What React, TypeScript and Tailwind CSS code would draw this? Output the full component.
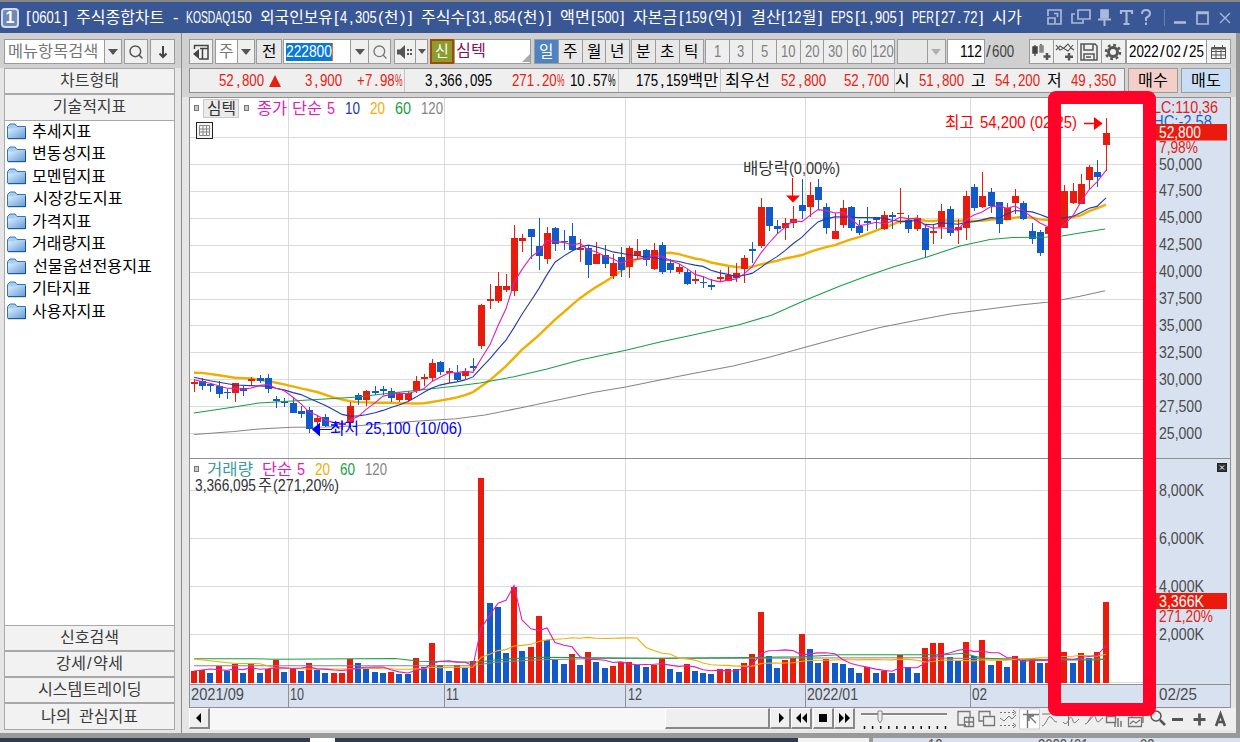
import React, { useLayoutEffect, useRef, useState } from "react";
import clsx from "clsx";
import { Search } from "lucide-react";

/* ------------------------------------------------------------------ */
/* Fixed pitch text: Hangul takes two cells, everything else one       */
/* ------------------------------------------------------------------ */

function Run({ text, width }: { text: string; width: number }) {
  const ref = useRef<HTMLSpanElement>(null);
  const [scale, setScale] = useState(1);

  // squeeze what is too wide for its cells, center what is narrower
  useLayoutEffect(() => {
    if (ref.current && ref.current.offsetWidth) setScale(Math.min(1.03, width / ref.current.offsetWidth));
  }, [text, width]);

  return (
    <span className="inline-block text-center whitespace-pre" style={{ width }}>
      <span ref={ref} className="inline-block origin-left" style={{ transform: `scaleX(${scale})` }}>
        {text}
      </span>
    </span>
  );
}

function Cells({ text, cell = 7.33, className }: { text: string; cell?: number; className?: string }) {
  const runs = text.match(/[가-힣]+|[A-Z]+|[0-9]+|\s+|./g) ?? [];
  return (
    <span className={clsx("inline-block whitespace-nowrap leading-none", className)}>
      {runs.map((run, i) => (
        <Run key={i} text={run} width={run.length * cell * (/[가-힣]/.test(run) ? 2 : 1)} />
      ))}
    </span>
  );
}

/* ------------------------------------------------------------------ */
/* Chart data (y positions on the plot)                                */
/* ------------------------------------------------------------------ */

type Candle = ["r" | "b", number, number, number, number]; // direction, high, body top, body bottom, low

const CANDLES: Candle[] = [
  ["r", 379, 382, 384, 392], ["b", 378, 381, 386, 390], ["b", 383, 384, 386, 392], ["b", 381, 386, 394, 398],
  ["b", 389, 391.5, 393, 399], ["r", 383, 383, 393, 402], ["b", 386, 388, 391, 396], ["r", 377, 379, 381, 386],
  ["b", 375, 378, 381, 383], ["b", 374, 378, 389, 393], ["b", 396, 399, 401, 408], ["b", 398, 401, 402.5, 407],
  ["b", 397, 403, 413, 413], ["b", 406, 411, 414, 418], ["b", 407, 410, 429, 433], ["r", 415, 418, 422, 426],
  ["b", 414, 417, 426, 427], ["b", 423, 424, 426, 427], ["b", 421, 423, 425, 430], ["r", 402, 406, 422, 427],
  ["b", 393, 395, 400, 405], ["r", 390, 391, 400, 406], ["b", 386, 391, 392.5, 395], ["b", 386, 389, 391, 395],
  ["b", 388, 391, 398, 402], ["r", 392, 393, 400, 402], ["r", 391, 393, 400, 401], ["r", 376, 381, 391, 393],
  ["r", 374, 377, 378.5, 386], ["r", 359, 363, 378, 381], ["b", 361, 362, 372, 375], ["r", 368, 371, 373, 383],
  ["b", 365, 373, 380, 381], ["r", 368, 371, 376, 379], ["b", 358, 366, 368, 372], ["r", 304, 305, 346, 349],
  ["r", 284, 299, 301, 309], ["r", 272, 286, 301, 303], ["r", 274, 286, 290, 292], ["r", 225, 238, 291, 296],
  ["r", 234, 238, 241, 252], ["b", 229, 229, 237, 259], ["b", 218, 246, 256, 270], ["r", 227, 233, 259, 264],
  ["b", 227, 228, 244, 251], ["b", 230, 240.5, 242, 250], ["b", 223, 236, 250, 251], ["r", 239, 248, 250, 262],
  ["b", 245, 248, 265, 278], ["r", 242, 254, 264, 264], ["b", 245, 255, 264, 268], ["r", 254, 263, 276, 279],
  ["b", 247, 257, 270, 277], ["r", 246, 248, 267, 278], ["r", 239, 251, 256, 259], ["b", 249, 250, 260, 266],
  ["r", 243, 250, 269, 270], ["b", 242, 245, 272, 274], ["b", 259, 263, 270, 273], ["r", 264, 267, 272, 274],
  ["b", 269, 272, 284, 285], ["r", 270, 279, 280.5, 284], ["b", 276, 281.5, 283, 288], ["b", 279, 285, 286.5, 290],
  ["r", 270, 277, 278.5, 282], ["r", 267, 275, 281, 281], ["r", 263, 273, 278, 282], ["r", 255, 258, 269, 283],
  ["b", 242, 249, 251, 263], ["r", 198, 207, 246, 248], ["b", 207, 207, 226, 231], ["b", 220, 226, 229, 234],
  ["r", 218, 223, 228, 240], ["r", 206, 219, 223, 228], ["b", 179, 205, 211, 219], ["r", 182, 195, 207, 217],
  ["b", 179, 187, 200, 210], ["b", 203, 207, 228, 234], ["r", 213, 231, 239, 239], ["r", 200, 208, 225, 228],
  ["b", 206, 207, 228, 231], ["b", 220, 226, 233, 235], ["b", 207, 220.5, 222.5, 231], ["b", 217, 217, 220, 229],
  ["r", 211, 215, 229, 230], ["b", 212, 215, 216.5, 229], ["r", 188, 212.5, 214, 224], ["b", 215, 220, 229, 233],
  ["r", 215, 218, 229, 231], ["b", 224, 228, 250, 258], ["r", 224, 231, 232.5, 244], ["r", 204, 211, 227, 239],
  ["b", 206, 209, 233, 236], ["r", 219, 227, 230, 244], ["r", 191, 196, 228, 240], ["b", 184, 187, 208, 211],
  ["r", 172, 196, 207, 208], ["b", 188, 192, 206, 213], ["b", 202, 202, 224, 233], ["r", 203, 208, 220, 220],
  ["r", 189, 196, 203, 214], ["b", 201, 203, 219, 220], ["b", 223, 231, 239, 244], ["b", 230, 232, 253, 256],
  ["r", 225, 227, 234, 250], ["r", 212, 216, 228, 232], ["r", 185, 191, 228, 228], ["r", 183, 191, 203, 204],
  ["r", 174, 184, 204, 204], ["r", 165, 167, 180, 189], ["b", 160, 172, 177, 187], ["r", 118, 133, 145, 171],
];

const VOLUME_TOP = [
  671, 670, 673.3, 666.3, 671.3, 664, 673.3, 664.3, 673.3, 668.7, 660, 672, 668.7, 670.7, 663, 670.3, 673, 673, 673,
  658.7, 663, 668.3, 672, 673.3, 671.7, 674, 674, 658, 667, 643, 664.7, 670.7, 665, 668, 660.7, 478, 603, 606.7, 653,
  586.7, 650.7, 646.7, 615.7, 640, 659.7, 664.3, 654.3, 665.3, 651.7, 661.7, 668, 666, 662, 662, 665.3, 667, 665, 659,
  669, 672, 664, 670.7, 673, 674, 669, 669, 669, 663, 654.3, 611.7, 655.7, 668, 660, 657.7, 634.3, 649.3, 663, 659,
  663, 664.3, 668, 673, 667, 673, 671, 672.7, 655, 667.3, 673, 648, 643, 643, 657, 660.7, 641.7, 655.7, 640.3, 665.3,
  661, 666.7, 655.7, 660, 658, 663, 663, 656.7, 651.7, 663, 653, 658, 651.7, 601.7,
];

const VOLUME_DIR =
  "rrbrbrbrbrrbrbrbbrrrbbbbrbbrbrbbrbrrbbbrbrrbbbrbrbbrrrbbrrbbrbbbrrbrrrbbrrrbbrbbbbrbrbrbbrrrbbrbrbrbrbrbrrrbrbrr";

const STEP = 8.212;
const X0 = 194;
const xAt = (i: number) => Math.round(X0 + i * STEP);

const closes = CANDLES.map(([dir, , top, bottom]) => (dir === "r" ? top : bottom));

/* Moving average; `head` holds [index, y] points from before there are enough bars */
function average(values: number[], n: number, head: [number, number][]) {
  const points = head.map(([i, y]) => `${xAt(i)},${y}`);
  for (let i = n - 1; i < values.length; i++) {
    const sum = values.slice(i - n + 1, i + 1).reduce((a, b) => a + b, 0);
    points.push(`${xAt(i)},${(sum / n).toFixed(1)}`);
  }
  return points.join(" ");
}

const MA5 = average(closes, 5, [[0, 379.7], [2, 383.3]]);
const MA10 = average(closes, 10, [[0, 377.3], [2, 380.7], [5, 385]]);
const MA20 = average(closes, 20, [[0, 372.7], [1, 372.9], [3, 375.3], [5, 377.7], [7, 378.5], [9, 381], [11, 384.3], [13, 388.3], [15, 392], [17, 397.7]]);
const MA60 =
  "194,413 234,407 259,403 292,401 325,399 358,397 391,393 423,389.7 456,386 480,383 514,376.7 547,369 580,360 627,350 660,342 693,335 740,324.5 772,315 807,299.5 840,286 867,276 893,267 927,257 960,246 990,239.5 1013,237.5 1047,237 1062,236 1080,233 1105,229";
const MA120 =
  "194,434.5 234,431.5 259,429 292,427.3 325,427 358,425.7 391,423 423,420.7 456,418.7 485,415 520,408 560,399.5 593,392.5 627,386.7 660,380 693,373.5 733,366 770,357 806,347 843,337 880,327.5 918,320 950,314 987,309.3 1020,305 1047,302.3 1062,299.7 1080,296.3 1105,290.7";

const VOL5 = average(VOLUME_TOP, 5, [[0, 671], [2, 669]]);
const VOL20 = average(VOLUME_TOP, 20, [[0, 659], [3, 661.7], [5, 663.5], [8, 663.7], [10, 668], [14, 669]]);
const VOL60 =
  "194,658.7 255,658.7 275,659.3 395,658.5 420,661.3 475,662.3 505,659 540,657.3 660,658.3 748,657.5 800,656.7 840,654.7 945,654.7 963,653.3 982,658 1023,660 1100,660 1105,659";
const VOL120 = "194,665.7 472,665.7 495,662.3 540,659.7 600,658.5 800,658 920,657.7 1040,659.5 1105,659";

const PRICE_LABELS = ["50,000", "47,500", "45,000", "42,500", "40,000", "37,500", "35,000", "32,500", "30,000", "27,500", "25,000"];
const VOLUME_LABELS: [string, number][] = [["8,000K", 490.5], ["6,000K", 538.5], ["4,000K", 586.5], ["2,000K", 634.5]];
const MONTHS: [string, number, number][] = [["2021/09", 191, 53], ["10", 290, 14], ["11", 446, 13], ["12", 628, 14], ["2022/01", 807, 51], ["02", 972, 15], ["02/25", 1159, 38]];
const MONTH_LINES = [288, 444, 625, 805, 970];

const fill = (dir: string) => (dir === "r" ? "#e91b0c" : "#1259c9");

interface LabelProps {
  x: number;
  y: number;
  w: number;
  color: string;
  children: string;
  size?: number;
}

function Label({ x, y, w, color, children, size = 16 }: LabelProps) {
  return (
    <text x={x} y={y} fill={color} fontSize={size} textLength={w} lengthAdjust="spacingAndGlyphs">
      {children}
    </text>
  );
}

function Chart() {
  return (
    <svg viewBox="189 97 1042 611" className="block h-[611px] w-[1042px] shrink-0">
      <rect x="189" y="97" width="1042" height="611" fill="#fff" />
      <rect x="1152" y="97" width="79" height="611" fill="#d7e1ef" />
      <rect x="189" y="685" width="1042" height="23" fill="#d7e1ef" />

      {/* grid */}
      <g stroke="#dadada" shapeRendering="crispEdges">
        {[-1, ...PRICE_LABELS.keys()].map((i) => {
          const y = Math.floor(164.5 + i * 26.9) + 0.5;
          return <line key={i} x1="190" x2="1152" y1={y} y2={y} />;
        })}
        {VOLUME_LABELS.map(([t, y]) => (
          <line key={t} x1="190" x2="1152" y1={y} y2={y} />
        ))}
        <line x1="190" x2="1152" y1="682.5" y2="682.5" />
        {MONTH_LINES.map((x) => (
          <line key={x} x1={x + 0.5} x2={x + 0.5} y1="98" y2="684" />
        ))}
      </g>
      <g stroke="#8f8f8f" shapeRendering="crispEdges">
        {MONTH_LINES.map((x) => (
          <line key={x} x1={x + 0.5} x2={x + 0.5} y1="685" y2="707" />
        ))}
        <path d="M189 97.5H1231M189 458.5H1231M189 684.5H1231M189 707.5H1231M189.5 97V708M1230.5 97V708" fill="none" />
        {PRICE_LABELS.map((t, i) => (
          <line key={t} x1="1152" x2="1157" y1={164.5 + i * 26.9} y2={164.5 + i * 26.9} />
        ))}
        {VOLUME_LABELS.map(([t, y]) => (
          <line key={t} x1="1152" x2="1157" y1={y} y2={y} />
        ))}
      </g>

      {/* slow averages are drawn under the candles */}
      <g fill="none">
        <polyline points={MA120} stroke="#858585" strokeWidth="1.1" />
        <polyline points={MA20} stroke="#f2ae00" strokeWidth="2.4" />
      </g>

      <g shapeRendering="crispEdges">
        {CANDLES.map(([dir, high, top, bottom, low], i) => (
          <g key={i} fill={fill(dir)}>
            <rect x={xAt(i)} y={high} width="1" height={Math.max(low - high, 1)} />
            <rect x={xAt(i) - 3} y={top} width="7" height={Math.max(bottom - top, 1)} />
          </g>
        ))}
        {VOLUME_TOP.map((y, i) => (
          <rect key={i} x={xAt(i) - 3} y={y} width="6" height={683 - y} fill={fill(VOLUME_DIR[i])} />
        ))}
      </g>

      <g fill="none" strokeWidth="1.1">
        <polyline points={MA60} stroke="#17a043" />
        <polyline points={MA10} stroke="#2139b4" />
        <polyline points={MA5} stroke="#e31bb7" />
        <polyline points={VOL120} stroke="#858585" />
        <polyline points={VOL60} stroke="#17a043" />
        <polyline points={VOL20} stroke="#f2ae00" />
        <polyline points={VOL5} stroke="#e31bb7" />
      </g>

      {/* price legend */}
      <g fill="#c8c8c8" stroke="#777">
        <rect x="194.500" y="105.500" width="4" height="5" />
        <rect x="244.500" y="105.500" width="4" height="5" />
        <rect x="194.500" y="466.500" width="4" height="5" />
      </g>
      <rect x="203.500" y="99.500" width="35" height="18" fill="#ebebeb" stroke="#c9c9c9" />
      <Label x={207} y={113.5} w={29} color="#333">심텍</Label>
      <Label x={257} y={113.5} w={30} color="#e31bb7">종가</Label>
      <Label x={292} y={113.5} w={30} color="#e31bb7">단순</Label>
      <Label x={327} y={113.5} w={8} color="#e31bb7">5</Label>
      <Label x={345} y={113.5} w={15} color="#2139b4">10</Label>
      <Label x={370} y={113.5} w={15} color="#f2ae00">20</Label>
      <Label x={395} y={113.5} w={16} color="#17a043">60</Label>
      <Label x={421} y={113.5} w={22} color="#858585">120</Label>
      <g fill="#f4f4f4" stroke="#222">
        <rect x="196.500" y="122.500" width="16" height="16" />
        <path d="M199.500 125.500h10v10h-10zM203 125.500v10M206.500 125.500v10M199.500 129h10M199.500 132h10" stroke="#888" />
      </g>

      {/* volume legend */}
      <Label x={207} y={474.5} w={46} color="#3d9c9c">거래량</Label>
      <Label x={262} y={474.5} w={30} color="#e31bb7">단순</Label>
      <Label x={297} y={474.5} w={8} color="#e31bb7">5</Label>
      <Label x={315} y={474.5} w={15} color="#f2ae00">20</Label>
      <Label x={340} y={474.5} w={15} color="#17a043">60</Label>
      <Label x={365} y={474.5} w={22} color="#858585">120</Label>
      <Label x={195} y={491} w={61} color="#333">3,366,095</Label>
      <Label x={258} y={491} w={14} color="#333">주</Label>
      <Label x={273} y={491} w={66} color="#333">(271,20%)</Label>

      {/* annotations */}
      <Label x={945} y={127.500} w={29} color="#f00">최고</Label>
      <Label x={980} y={127.500} w={97} color="#f00">54,200 (02/25)</Label>
      <path d="M1084 123.500h18" stroke="#f00" strokeWidth="1.500" />
      <path d="M1094 117l8.500 6.500-8.500 6.500z" fill="#f00" />
      <Label x={743} y={173.500} w={46} color="#333">배당락</Label>
      <Label x={789} y={173.500} w={51} color="#333">(0,00%)</Label>
      <path d="M792.500 178v18" stroke="#f00" />
      <path d="M786 195.500h14l-7 7z" fill="#f00" />
      <path d="M332 429.500h-13" stroke="#00f" />
      <path d="M312 429.500l8-7v14z" fill="#00f" />
      <Label x={330} y={434} w={29} color="#00f">최저</Label>
      <Label x={365} y={434} w={97} color="#00f">25,100 (10/06)</Label>

      {/* price axis */}
      {PRICE_LABELS.map((t, i) => (
        <Label key={t} x={1159} y={169.5 + i * 26.9} w={43} color="#4c4c4c">
          {t}
        </Label>
      ))}
      <Label x={1153} y={113} w={65} color="#e01f12">LC:110,36</Label>
      <Label x={1153} y={127} w={59} color="#1d62ca">HC:-2,58</Label>
      <rect x="1153" y="124" width="74" height="16.500" fill="#e91b0c" />
      <Label x={1159} y={138} w={42} color="#fff">52,800</Label>
      <Label x={1159} y={153} w={39} color="#e01f12">7,98%</Label>

      {/* volume axis */}
      {VOLUME_LABELS.map(([t, y]) => (
        <Label key={t} x={1159} y={y + 5} w={45} color="#4c4c4c">
          {t}
        </Label>
      ))}
      <rect x="1153" y="593" width="74" height="16" fill="#e91b0c" />
      <Label x={1159} y={606.5} w={45} color="#fff">3,366K</Label>
      <Label x={1159} y={621.5} w={54} color="#e01f12">271,20%</Label>
      <rect x="1217.500" y="463.500" width="9" height="8" fill="#333" stroke="#222" />
      <path d="M1220 465.500l4 4m0-4l-4 4" stroke="#fff" />

      {MONTHS.map(([t, x, w]) => (
        <Label key={t} x={x} y={700} w={w} color="#4c4c4c">
          {t}
        </Label>
      ))}
    </svg>
  );
}

/* ------------------------------------------------------------------ */
/* Small controls                                                      */
/* ------------------------------------------------------------------ */

function Box({ className, children }: { className?: string; children?: React.ReactNode }) {
  return (
    <div className={clsx("flex h-[25px] shrink-0 items-center justify-center border border-[#9b9b9b]", className)}>
      {children}
    </div>
  );
}

function Caret({ className = "text-[#555]" }: { className?: string }) {
  return (
    <svg viewBox="0 0 10 6" className={clsx("h-[6px] w-[10px]", className)}>
      <path d="M0 0h10L5 6z" fill="currentColor" />
    </svg>
  );
}

function Tool({ children }: { children: React.ReactNode }) {
  return (
    <Box className="-mr-px w-[25px] bg-[#f0f0f0]">
      <svg viewBox="0 0 20 20" className="h-5 w-5" fill="none" stroke="#555" strokeWidth="1.5">
        {children}
      </svg>
    </Box>
  );
}

function TitleBar() {
  return (
    <header className="flex h-[33px] shrink-0 items-center border-t-2 border-[#868686] bg-[#3a5795]">
      <div className="ml-px flex h-[20px] w-[18px] items-center justify-center rounded-[4px] border-2 border-[#d5dcec] bg-[#7088b9] text-base leading-none font-bold text-white">
        1
      </div>
      <div className="ml-[6px] h-[20px] w-[1014px] overflow-hidden text-base leading-none text-white">
        <Cells
          className="pt-[2px]"
          text="[0601] 주식종합차트 - KOSDAQ150 외국인보유[4,305(천)] 주식수[31,854(천)] 액면[500] 자본금[159(억)] 결산[12월] EPS[1,905] PER[27.72] 시가"
        />
      </div>
      <svg viewBox="0 0 192 24" className="ml-[8px] h-6 w-[192px]" fill="none" stroke="#a9b9d9" strokeWidth="1.7">
        <path d="M1 10V4h13v14H9" />
        <path d="M1 12h7v6H1z" />
        <path d="M7 7.500h3.500V11" />
        <path d="M31 4h12v9H31zM28 8h-3v9h11v-3" />
        <path d="M54 4h7v8h-7z" fill="#a9b9d9" />
        <path d="M51 13.500h13M57.500 13v7" strokeWidth="2" />
        <path d="M74 8V5h11v3M79.500 5v13M76.500 18h6" strokeWidth="2.200" />
        <path d="M95 8q0-4 4-4t4 3.500q0 2.500-4 4.500v3M99 16.500v2.500" strokeWidth="2" />
        <path d="M117.500 3v17" stroke="#6a7fb0" strokeWidth="1" />
        <path d="M127 16.500h12" strokeWidth="2.600" />
        <path d="M150 6h11v12h-11zM150 7.500h11" />
        <path d="M173 7l10 10m0-10l-10 10" strokeWidth="1.300" />
      </svg>
    </header>
  );
}

const TREE = ["추세지표", "변동성지표", "모멘텀지표", "시장강도지표", "가격지표", "거래량지표", "선물옵션전용지표", "기타지표", "사용자지표"];

function PanelButton({ children }: { children: string }) {
  return (
    <button className="h-[26.3px] w-full shrink-0 border-x border-y border-[#a9a9a9] bg-[#f2f2f2] text-[#3c3c3c]">
      <Cells text={children} cell={7.4} />
    </button>
  );
}

function Folder() {
  return (
    <svg viewBox="0 0 19 17" className="h-[17px] w-[19px] shrink-0">
      <defs>
        <linearGradient id="folder" x1="0" y1="0" x2="1" y2="1">
          <stop offset="0" stopColor="#e0f0ff" />
          <stop offset="1" stopColor="#5f9bd8" />
        </linearGradient>
      </defs>
      <path d="M.500 15V3.500L3 1h5L10 3.500h8.500v12H1z" fill="#a5cdf2" stroke="#3276b8" />
      <path d="M1 15.500V5.500h6L8.500 4.500h10v11z" fill="url(#folder)" />
      <path d="M1 15.700h17.500V5" fill="none" stroke="#164e8c" />
    </svg>
  );
}

function Sidebar() {
  return (
    <aside className="flex w-[182px] shrink-0 flex-col border-r border-[#8c8c8c] bg-[#e6e6e6]">
      <div className="flex h-[35px] items-start bg-[#d0d0d0] pt-[6px] pl-1">
        <Box className="w-[101px] justify-start bg-white pl-[2px] text-[#777]">
          <Cells text="메뉴항목검색" cell={7.5} />
        </Box>
        <Box className="-ml-px w-[18px] bg-[#f0f0f0]">
          <Caret />
        </Box>
        <Box className="ml-[2px] w-[24px] bg-[#f0f0f0] text-[#555]">
          <Search size={16} strokeWidth={2.2} />
        </Box>
        <Box className="ml-[2px] w-[25px] bg-[#f0f0f0]">
          <svg viewBox="0 0 12 14" className="h-[14px] w-3">
            <path d="M6 1v11M2.500 8.500L6 12l3.500-3.500" fill="none" stroke="#444" strokeWidth="2" />
          </svg>
        </Box>
      </div>
      <div className="flex w-[175px] flex-col pl-1">
        <PanelButton>차트형태</PanelButton>
        <PanelButton>기술적지표</PanelButton>
        <ul className="h-[504px] border-x border-[#a9a9a9] bg-white text-black">
          {TREE.map((name) => (
            <li key={name} className="flex h-[22.5px] items-center pl-[2px]">
              <Folder />
              <Cells text={name} cell={7.45} className="ml-[6px]" />
            </li>
          ))}
        </ul>
        <PanelButton>신호검색</PanelButton>
        <PanelButton>강세/약세</PanelButton>
        <PanelButton>시스템트레이딩</PanelButton>
        <PanelButton>나의 관심지표</PanelButton>
      </div>
    </aside>
  );
}

function Toolbar() {
  return (
    <div className="flex h-[35px] shrink-0 items-start bg-[#d0d0d0] pt-[6px] pl-[7px]">
      <Box className="w-[24px] bg-[#f0f0f0]">
        <svg viewBox="0 0 16 16" className="h-4 w-4" fill="none" stroke="#444" strokeWidth="1.5">
          <path d="M1.500 5V1.500H15V15H6M7 4.500h8M9.500 5v10" />
          <path d="M0 10l6-5v10z" fill="#444" stroke="none" />
        </svg>
      </Box>
      <Box className="ml-[2px] w-[23px] bg-white text-[#777]">
        <Cells text="주" />
      </Box>
      <Box className="-ml-px w-[18px] bg-[#f0f0f0]">
        <Caret />
      </Box>
      <Box className="ml-px w-[26px] bg-[#e8e8e8] text-black">
        <Cells text="전" />
      </Box>
      <Box className="ml-px w-[68px] justify-start bg-white pl-[2px]">
        <Cells text="222800" cell={7.6} className="border-r border-[#e0782f] bg-[#0a78d7] py-px text-white" />
      </Box>
      <Box className="-ml-px w-[19px] bg-[#f0f0f0]">
        <Caret />
      </Box>
      <Box className="-ml-px w-[23px] bg-[#f0f0f0] text-[#777]">
        <Search size={16} />
      </Box>
      <Box className="ml-[3px] w-[22px] bg-[#f0f0f0]">
        <svg viewBox="0 0 16 14" className="h-[14px] w-4" fill="#555">
          <path d="M0 4.500h3L8 0v14L3 9.500H0zM10 4h2v2h-2zM10 8h2v2h-2zM13 4h2v2h-2zM13 8h2v2h-2z" />
        </svg>
      </Box>
      <Box className="-ml-px w-[13px] bg-[#f0f0f0]">
        <svg viewBox="0 0 8 5" className="h-[5px] w-2">
          <path d="M0 0h8L4 5z" fill="#555" />
        </svg>
      </Box>
      <Box className="ml-[2px] w-[24px] border-2 border-[#a14b08] bg-[#8b9d2e] text-white">
        <Cells text="신" cell={7} />
      </Box>
      <Box className="w-[77px] items-end justify-start bg-white pb-[4px] pl-px text-[#8a1157]">
        <Cells text="심텍" />
        <svg viewBox="0 0 8 8" className="-mb-[3px] ml-auto h-2 w-2">
          <path d="M8 0v8H0z" fill="#aaa" />
        </svg>
      </Box>
      <div className="ml-[3px] flex">
        <Box className="w-[24.8px] border-[#4d82c4] bg-[#4d82c4] text-white">
          <Cells text="일" />
        </Box>
        {["주", "월", "년"].map((t) => (
          <Box key={t} className="-ml-px w-[24.8px] bg-[#e8e8e8] text-black">
            <Cells text={t} />
          </Box>
        ))}
      </div>
      <div className="ml-px flex pl-px">
        {["분", "초", "틱"].map((t) => (
          <Box key={t} className="-ml-px w-[24.8px] bg-[#e8e8e8] text-black">
            <Cells text={t} />
          </Box>
        ))}
      </div>
      <div className="ml-[1.4px] flex pl-px">
        {["1", "3", "5", "10", "20", "30", "60", "120"].map((t) => (
          <Box key={t} className="-ml-px w-[24.7px] bg-[#eee] text-[#808080]">
            <Cells text={t} />
          </Box>
        ))}
      </div>
      <Box className="ml-[1.4px] w-[31px] bg-[#e8e8e8]" />
      <Box className="-ml-px w-[19px] bg-[#e8e8e8]">
        <Caret className="text-[#b0b0b0]" />
      </Box>
      <Box className="ml-px w-[38px] justify-end bg-white pr-px text-black">
        <Cells text="112" cell={7.5} />
      </Box>
      <Cells text="/600" cell={7.5} className="w-[44px] pt-[5px] text-[#444]" />
      <div className="flex">
        <Tool>
          <path d="M4 3v11M10 2v8" stroke="#555" />
          <path d="M2 5h4v6H2z" fill="#444" stroke="#444" />
          <path d="M9 4h3v6H9z" fill="#888" stroke="#888" />
          <path d="M16 11v7M12.500 14.500h7" strokeWidth="2.500" />
        </Tool>
        <Tool>
          <path d="M1 8l4-4 8 5 5-6M1 3l4 5 4-2 4-4 3 4 3 2" strokeWidth="1.100" />
          <path d="M14 11v7.500M10 14.700h8" strokeWidth="2.500" />
        </Tool>
        <Tool>
          <path d="M2 2h14l2 2v14H2zM5 2v6h9V2M5 18v-6h10v6M7 15h5" />
        </Tool>
        <Tool>
          <circle cx="10" cy="10" r="4.500" strokeWidth="3" />
          <circle cx="10" cy="10" r="7" strokeWidth="2.500" strokeDasharray="2.750 2.750" />
        </Tool>
      </div>
      <Box className="ml-px w-[81px] bg-white text-black">
        <Cells text="2022/02/25" cell={7.5} />
      </Box>
      <Box className="-ml-px w-[25px] bg-[#f4f4f4]">
        <svg viewBox="0 0 15 14" className="h-[14px] w-[15px]" fill="none" stroke="#555">
          <path d="M.500 2.500h14v11H.500zM.500 6.500h14M.500 10h14M5 5v8M10 5v8M3.500 0v3M11.500 0v3" />
          <path d="M1 3.500h13" strokeWidth="2" />
        </svg>
      </Box>
    </div>
  );
}

function Quote({ text, className }: { text: string; className?: string }) {
  return <Cells text={text} cell={7.45} className={clsx("shrink-0 text-right", className)} />;
}

function QuoteBar() {
  return (
    <div className="flex h-[29px] shrink-0 items-start bg-[#d4d4d4] pl-[7px]">
      <div className="flex h-[25px] w-[936px] items-center border border-[#8f8f8f] bg-[#efefef] text-[#e6210f]">
        <div className="flex h-full w-[215px] shrink-0 items-center border-r border-[#c4c4c4]">
          <Quote text="52,800" className="w-[74px]" />
          <svg viewBox="0 0 12 12" className="ml-[5px] h-3 w-3">
            <path d="M6 0l6 12H0z" fill="#e6210f" />
          </svg>
          <Quote text="3,900" className="w-[61px]" />
          <Quote text="+7.98%" className="w-[60px]" />
        </div>
        <div className="flex h-full w-[214px] shrink-0 items-center border-r border-[#c4c4c4]">
          <Quote text="3,366,095" className="w-[87px] text-black" />
          <Quote text="271.20%" className="w-[72px]" />
          <Quote text="10.57%" className="w-[51px] text-black" />
        </div>
        <div className="flex h-full w-[102px] shrink-0 items-center border-r border-[#c4c4c4] text-black">
          <Quote text="175,159백만" className="w-[99px]" />
        </div>
        <div className="flex h-full w-[174px] shrink-0 items-center border-r border-[#c4c4c4]">
          <Quote text="최우선" className="w-[48px] text-black" />
          <Quote text="52,800" className="w-[57px]" />
          <Quote text="52,700" className="w-[63px]" />
        </div>
        <Quote text="시" className="w-[15px] text-black" />
        <Quote text="51,800" className="w-[54px]" />
        <Quote text="고" className="w-[22px] text-black" />
        <Quote text="54,200" className="w-[54px]" />
        <Quote text="저" className="w-[22px] text-black" />
        <Quote text="49,350" className="w-[54px]" />
      </div>
      <Box className="ml-[3px] w-[50px] bg-[#f4cfc9] text-black">
        <Cells text="매수" />
      </Box>
      <Box className="ml-[3px] w-[50px] bg-[#c8def4] text-black">
        <Cells text="매도" />
      </Box>
    </div>
  );
}

function ScrollButton({ d, className }: { d: string; className?: string }) {
  return (
    <button
      className={clsx(
        "flex h-[21px] w-[21px] shrink-0 items-center justify-center border-t border-r-2 border-b-2 border-l border-t-white border-r-[#888] border-b-[#888] border-l-white bg-[#efefef]",
        className,
      )}
    >
      <svg viewBox="0 0 12 10" className="h-[10px] w-3">
        <path d={d} fill="#000" />
      </svg>
    </button>
  );
}

function BottomBar() {
  return (
    <div className="flex h-[22px] shrink-0 bg-[#efefef]">
      <ScrollButton d="M3 5l5-5v10z" />
      <div className="w-[455px] bg-[#f7f7f7]" />
      <div className="h-[21px] w-[105px] border-t border-r-2 border-b-2 border-l border-t-white border-r-[#888] border-b-[#888] border-l-white bg-[#efefef]" />
      <ScrollButton d="M5 0l5 5-5 5z" />
      <ScrollButton d="M6 0v10L1 5zM12 0v10L7 5z" />
      <ScrollButton d="M2 1h8v8H2z" className="ml-px" />
      <ScrollButton d="M1 0v10l5-5zM7 0v10l5-5z" />
      <svg viewBox="855 708 375 22" className="h-[22px] w-[375px]" fill="none" stroke="#777">
        {/* zoom slider */}
        <path d="M861 714h86" stroke="#888" strokeWidth="2" />
        <path d="M861 715.500h86" stroke="#fff" />
        <path d="M878 711h4v9l-2 3-2-3z" fill="#efefef" stroke="#888" />
        <path d="M864.500 726v3m8.100-3v3m8.100-3v3m8.100-3v3m8.100-3v3m8.100-3v3m8.100-3v3m8.100-3v3m8.100-3v3m8.100-3v3m8.100-3v3" stroke="#111" strokeWidth="1.500" />
        {/* chart tools */}
        <path d="M966 725h-8v-13.500h12v6M964.500 717.500h9v9h-9zM969 717.500v9M964.500 722h9" strokeWidth="1.300" />
        <path d="M983 721h-4v-9.500h11v4M983.500 716.500h11v9h-11z" strokeWidth="1.300" />
        <path d="M1000 712.500h14M1000 725.500h14" strokeDasharray="2 2" />
        <path d="M1000 718l4 3 5-5 3 3 4-4M1013 710l3 2.500-3 2.500M1013 723l3 2.500-3 2.500" />
        <path d="M1019.500 709h20v20h-20z" fill="#fff" stroke="#ccc" />
        <path d="M1023 714.500h16M1027.500 710v18M1029 716l7 7M1029 721v-5h5" strokeWidth="1.400" />
        <path d="M1042 714h8M1042 726c4 0 6-12 9-9s3 5 6 5M1068.500 714v12M1063 722c3 4 5 0 6-3s3-2 4 2 4 0 6-2" />
        <path d="M1085 724c4 0 5-9 8-9s3 7 5 7 3-4 5-4M1087 723l9-10" />
        <path d="M1106.500 716.500h9v6h-9zM1115 727v-5m3 5v-9m3 9v-6" strokeWidth="1.500" />
        <path d="M1128.500 717.500h13v9h-13zM1132 717v-3h11v9M1130 724l3-3 3 2 4-3" strokeWidth="1.300" />
        <g stroke="#555">
          <circle cx="1156" cy="716" r="5" strokeWidth="1.500" />
          <path d="M1160 720l5 5" strokeWidth="2.500" />
          <path d="M1172 719.500h11M1193.500 719.500h12M1199.500 713.500v12" strokeWidth="2.800" />
          <path d="M1216 726l4.500-12 4.500 12M1217.500 722h6" strokeWidth="2.600" />
        </g>
      </svg>
    </div>
  );
}

export default function App() {
  return (
    <div className="relative flex h-[742px] w-[1240px] flex-col overflow-hidden bg-[#e6e6e6] font-['Liberation_Sans','Noto_Sans_CJK_KR',sans-serif] text-base leading-none">
      <TitleBar />
      <div className="flex h-[700px] shrink-0 border-r-4 border-[#969696]">
        <Sidebar />
        <main className="flex min-w-0 flex-1 flex-col">
          <Toolbar />
          <QuoteBar />
          <div className="pl-[7px]">
            <Chart />
            <BottomBar />
          </div>
        </main>
      </div>
      <div className="h-[5px] shrink-0 bg-[#999]" />
      <div className="flex h-[4px] shrink-0 bg-[#d7e1ef]">
        <div className="w-[310px] bg-[#2c3c4e]" />
        <div className="w-[25px] bg-white" />
        <div className="w-[463px] bg-[#2c3c4e]" />
        <div className="w-[71px] bg-[#f2f2f2]" />
        <div className="w-[4px] bg-[#999]" />
        <div className="flex h-[4px] flex-1 gap-[95px] overflow-hidden pl-[55px] text-base leading-none text-[#555]">
          <Cells text="12" />
          <Cells text="2022/01" />
          <Cells text="02" className="-ml-[44px]" />
        </div>
      </div>

      {/* highlight frame over the latest bars */}
      <div className="absolute top-[91px] left-[1048px] h-[625px] w-[108px] rounded-[8px] border-[13px] border-[#ff0428]" />
    </div>
  );
}
